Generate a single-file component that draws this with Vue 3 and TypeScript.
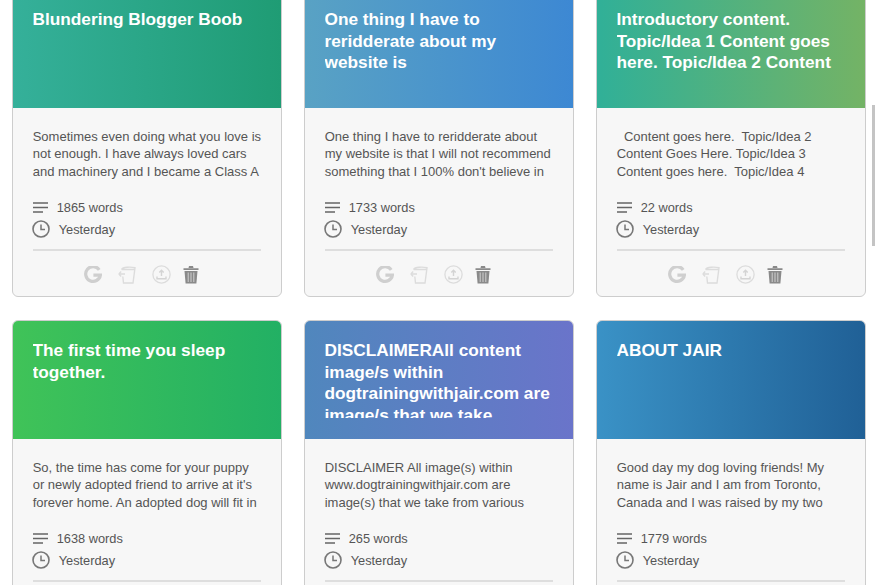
<script setup lang="ts">
interface Post {
  title: string;
  excerpt: string;
  words: number;
  gradient: string;
}

const posts: Post[] = [
  {
    title: "Blundering Blogger Boob",
    excerpt: "Sometimes even doing what you love is not enough. I have always loved cars and machinery and I became a Class A",
    words: 1865,
    gradient: "linear-gradient(90deg, #35b09a, #1f9c74)",
  },
  {
    title: "One thing I have to reridderate about my website is",
    excerpt: "One thing I have to reridderate about my website is that I will not recommend something that I 100% don't believe in",
    words: 1733,
    gradient: "linear-gradient(90deg, #59a2c4, #3d88d3)",
  },
  {
    title: "Introductory content. Topic/Idea 1 Content goes here. Topic/Idea 2 Content",
    excerpt: "  Content goes here.  Topic/Idea 2 Content Goes Here. Topic/Idea 3 Content goes here.  Topic/Idea 4",
    words: 22,
    gradient: "linear-gradient(90deg, #30b098, #74b365)",
  },
  {
    title: "The first time you sleep together.",
    excerpt: "So, the time has come for your puppy or newly adopted friend to arrive at it's forever home. An adopted dog will fit in",
    words: 1638,
    gradient: "linear-gradient(90deg, #40c358, #22b064)",
  },
  {
    title: "DISCLAIMERAll content image/s within dogtrainingwithjair.com are image/s that we take",
    excerpt: "DISCLAIMER All image(s) within www.dogtrainingwithjair.com are image(s) that we take from various",
    words: 265,
    gradient: "linear-gradient(90deg, #5087bd, #6a74ca)",
  },
  {
    title: "ABOUT JAIR",
    excerpt: "Good day my dog loving friends! My name is Jair and I am from Toronto, Canada and I was raised by my two",
    words: 1779,
    gradient: "linear-gradient(90deg, #3a92c6, #206096)",
  },
];
</script>

<template>
  <div class="page">
    <div class="grid">
      <article v-for="post in posts" :key="post.title" class="card">
        <header class="head" :style="{ background: post.gradient }">
          <h2 class="title">{{ post.title }}</h2>
        </header>
        <div class="body">
          <p class="excerpt">{{ post.excerpt }}</p>
          <div class="meta">
            <svg class="lines" width="16" height="11" viewBox="0 0 16 11">
              <path d="M0 1h15M0 5.5h15M0 10h10" stroke="#666" stroke-width="1.4" fill="none" />
            </svg>
            <span>{{ post.words }} words</span>
          </div>
          <div class="meta when">
            <svg class="clock" width="18" height="18" viewBox="0 0 18 18">
              <circle cx="9" cy="9" r="8" stroke="#777" stroke-width="1.6" fill="none" />
              <path d="M9 4.5V9.6H13" stroke="#777" stroke-width="1.5" fill="none" />
            </svg>
            <span>Yesterday</span>
          </div>
          <div class="actions">
            <svg width="18" height="18" viewBox="0 0 18 18">
              <path d="M15.2 3.8A7.4 7.4 0 1 0 16.4 9.2H9.4" stroke="#cfcfcf" stroke-width="3.2" fill="none" />
            </svg>
            <svg width="18" height="18" viewBox="0 0 18 18">
              <path d="M3.5 3.5C5 0.8 13 0.8 17 1.8L15 17H5.5L4.8 10.5M3.5 3.5H16.5M0.8 8H7M0.8 8L3.2 5.6M0.8 8L3.2 10.4" stroke="#dcdcdc" stroke-width="1.4" fill="none" />
            </svg>
            <svg width="19" height="19" viewBox="0 0 19 19">
              <circle cx="9.5" cy="9.5" r="8.6" stroke="#dcdcdc" stroke-width="1.3" fill="none" />
              <path d="M9.5 11V5.5M7.3 7.5L9.5 5.2L11.7 7.5M5 11.5V13.8H14V11.5" stroke="#d4d4d4" stroke-width="1.4" fill="none" />
            </svg>
            <svg class="trash" width="16" height="19" viewBox="0 0 16 19">
              <path d="M0.5 3.2H15.5V5H0.5ZM5.5 3L6 1H10L10.5 3Z" fill="#8a8a8a" />
              <path d="M1.5 6H14.5L13.4 18.5H2.6Z" fill="#8a8a8a" />
              <path d="M5.2 7.5V17M8 7.5V17M10.8 7.5V17" stroke="#d8d8d8" stroke-width="0.9" />
            </svg>
          </div>
        </div>
      </article>
    </div>
    <div class="scroll-thumb"></div>
  </div>
</template>

<style>
html,
body {
  margin: 0;
  height: 100%;
  overflow: hidden;
  background: #fff;
}
</style>

<style scoped>
.page {
  position: relative;
  height: 585px;
  overflow: hidden;
  font-family: "Liberation Sans", Arial, sans-serif;
}
.grid {
  display: grid;
  grid-template-columns: repeat(3, 270px);
  gap: 23px 22px;
  margin-top: -11px;
  padding-left: 12px;
}
.card {
  box-sizing: border-box;
  height: 308px;
  border: 1px solid #cdcdcd;
  border-radius: 6px;
  background: #f7f7f7;
  overflow: hidden;
}
.head {
  box-sizing: border-box;
  height: 119px;
  margin: -1px -1px 0;
  padding: 20px 20px 19px 20.5px;
  overflow: hidden;
}
.title {
  margin: 0;
  max-height: 78px;
  overflow: hidden;
  font-size: 17.25px;
  line-height: 21.6px;
  font-weight: 700;
  color: #fff;
}
.body {
  padding: 20px 20px 0 19.7px;
  color: #555;
}
.excerpt {
  margin: 0 -2px 15px 0;
  height: 53px;
  font-size: 13px;
  line-height: 17.4px;
  white-space: pre-wrap;
}
.meta {
  display: flex;
  align-items: center;
  gap: 8px;
  height: 22px;
  font-size: 12.8px;
}
.when {
  gap: 9px;
}
.clock {
  margin-left: -1px;
}
.actions {
  display: flex;
  align-items: center;
  justify-content: center;
  gap: 16px;
  margin-top: 9px;
  padding: 14px 11px 0 0;
  border-top: 2px solid #dedede;
}
.actions svg {
  filter: blur(0.4px);
}
.actions .trash {
  margin-left: -4px;
}
.scroll-thumb {
  position: absolute;
  top: 105px;
  right: 1px;
  width: 3px;
  height: 141px;
  background: #c4c4c4;
}
</style>
